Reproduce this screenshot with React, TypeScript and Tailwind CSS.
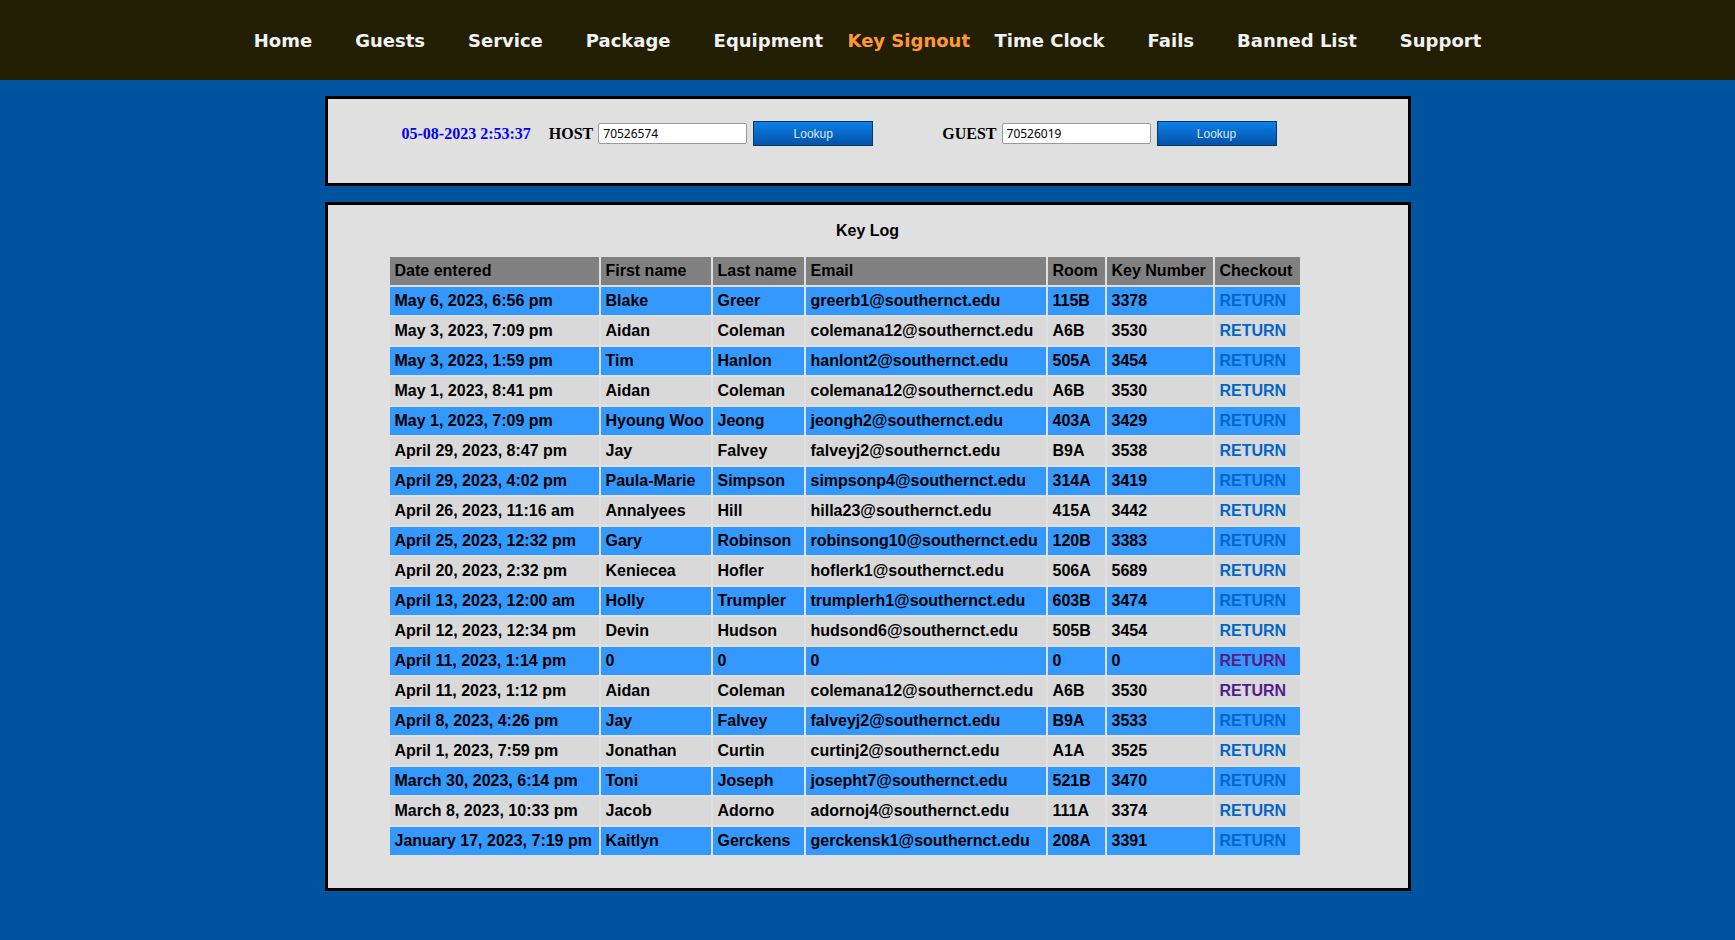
import React from "react";

type Row = {
  date: string;
  first: string;
  last: string;
  email: string;
  room: string;
  key: string;
  visited?: boolean;
};

const rows: Row[] = [
  { date: "May 6, 2023, 6:56 pm", first: "Blake", last: "Greer", email: "greerb1@southernct.edu", room: "115B", key: "3378" },
  { date: "May 3, 2023, 7:09 pm", first: "Aidan", last: "Coleman", email: "colemana12@southernct.edu", room: "A6B", key: "3530" },
  { date: "May 3, 2023, 1:59 pm", first: "Tim", last: "Hanlon", email: "hanlont2@southernct.edu", room: "505A", key: "3454" },
  { date: "May 1, 2023, 8:41 pm", first: "Aidan", last: "Coleman", email: "colemana12@southernct.edu", room: "A6B", key: "3530" },
  { date: "May 1, 2023, 7:09 pm", first: "Hyoung Woo", last: "Jeong", email: "jeongh2@southernct.edu", room: "403A", key: "3429" },
  { date: "April 29, 2023, 8:47 pm", first: "Jay", last: "Falvey", email: "falveyj2@southernct.edu", room: "B9A", key: "3538" },
  { date: "April 29, 2023, 4:02 pm", first: "Paula-Marie", last: "Simpson", email: "simpsonp4@southernct.edu", room: "314A", key: "3419" },
  { date: "April 26, 2023, 11:16 am", first: "Annalyees", last: "Hill", email: "hilla23@southernct.edu", room: "415A", key: "3442" },
  { date: "April 25, 2023, 12:32 pm", first: "Gary", last: "Robinson", email: "robinsong10@southernct.edu", room: "120B", key: "3383" },
  { date: "April 20, 2023, 2:32 pm", first: "Keniecea", last: "Hofler", email: "hoflerk1@southernct.edu", room: "506A", key: "5689" },
  { date: "April 13, 2023, 12:00 am", first: "Holly", last: "Trumpler", email: "trumplerh1@southernct.edu", room: "603B", key: "3474" },
  { date: "April 12, 2023, 12:34 pm", first: "Devin", last: "Hudson", email: "hudsond6@southernct.edu", room: "505B", key: "3454" },
  { date: "April 11, 2023, 1:14 pm", first: "0", last: "0", email: "0", room: "0", key: "0", visited: true },
  { date: "April 11, 2023, 1:12 pm", first: "Aidan", last: "Coleman", email: "colemana12@southernct.edu", room: "A6B", key: "3530", visited: true },
  { date: "April 8, 2023, 4:26 pm", first: "Jay", last: "Falvey", email: "falveyj2@southernct.edu", room: "B9A", key: "3533" },
  { date: "April 1, 2023, 7:59 pm", first: "Jonathan", last: "Curtin", email: "curtinj2@southernct.edu", room: "A1A", key: "3525" },
  { date: "March 30, 2023, 6:14 pm", first: "Toni", last: "Joseph", email: "josepht7@southernct.edu", room: "521B", key: "3470" },
  { date: "March 8, 2023, 10:33 pm", first: "Jacob", last: "Adorno", email: "adornoj4@southernct.edu", room: "111A", key: "3374" },
  { date: "January 17, 2023, 7:19 pm", first: "Kaitlyn", last: "Gerckens", email: "gerckensk1@southernct.edu", room: "208A", key: "3391" },
];

const navItems = ["Home", "Guests", "Service", "Package", "Equipment", "Key Signout", "Time Clock", "Fails", "Banned List", "Support"];

function LookupButton() {
  return (
    <button className="ml-[6px] w-[120px] h-[25px] border border-[#0b3566] bg-gradient-to-b from-[#0a80ea] to-[#0453a6] text-[#dce6f2] text-[12px] font-normal font-['Liberation_Sans',Arial,sans-serif] flex items-center justify-center">
      Lookup
    </button>
  );
}

function IdInput({ value }: { value: string }) {
  return (
    <input
      readOnly
      value={value}
      className="ml-[5px] w-[149px] h-[21px] border border-[#9a9a9a] rounded-[2px] bg-white px-[4px] text-[12px] font-normal text-black font-['Noto_Sans',sans-serif] outline-none"
    />
  );
}

export default function App() {
  const cell = "px-[5px] h-[28px] whitespace-nowrap align-middle";
  return (
    <div className="min-h-[940px] bg-[#00539f] font-['Liberation_Sans',Arial,sans-serif]">
      <nav className="h-[80px] bg-[#231f04] flex items-center justify-center">
        {navItems.map((item) => (
          <a
            key={item}
            className={
              item === "Key Signout"
                ? "px-[3px] text-[18px] font-bold text-[#ff9a33] font-['DejaVu_Sans',sans-serif] leading-[21px] pt-[1px]"
                : "px-[21.5px] text-[18px] font-bold text-[#f2f2f2] font-['DejaVu_Sans',sans-serif] leading-[21px] pt-[1px]"
            }
          >
            {item}
          </a>
        ))}
      </nav>

      <div className="mx-auto mt-[16px] w-[1086px] h-[90px] border-[3px] border-black bg-[#e0e0e0] pt-[22px]">
        <div className="flex items-center h-[25px] pl-[74px] font-['Liberation_Serif','Times_New_Roman',serif] font-bold">
          <span className="text-[16px] text-[#0000ff]">05-08-2023 2:53:37</span>
          <span className="ml-[18px] text-[16px] text-black">HOST</span>
          <IdInput value="70526574" />
          <LookupButton />
          <span className="ml-[69px] text-[16px] text-black">GUEST</span>
          <IdInput value="70526019" />
          <LookupButton />
        </div>
      </div>

      <div className="mx-auto mt-[16px] w-[1086px] h-[689px] border-[3px] border-black bg-[#e0e0e0] pt-[17px]">
        <div className="text-center font-bold text-[16px] leading-[18px] text-black">Key Log</div>
        <table className="mt-[15px] ml-[60px] w-[914px] table-fixed border-separate border-spacing-[2px] text-[16px] font-bold text-black">
          <colgroup>
            <col className="w-[209px]" />
            <col className="w-[110px]" />
            <col className="w-[91px]" />
            <col className="w-[240px]" />
            <col className="w-[57px]" />
            <col className="w-[106px]" />
            <col className="w-[85px]" />
          </colgroup>
          <thead>
            <tr className="bg-[#808080] text-left">
              <th className={cell + " font-bold"}>Date entered</th>
              <th className={cell + " font-bold"}>First name</th>
              <th className={cell + " font-bold"}>Last name</th>
              <th className={cell + " font-bold"}>Email</th>
              <th className={cell + " font-bold"}>Room</th>
              <th className={cell + " font-bold"}>Key Number</th>
              <th className={cell + " font-bold"}>Checkout</th>
            </tr>
          </thead>
          <tbody>
            {rows.map((r, i) => (
              <tr key={i} className={i % 2 === 0 ? "bg-[#3399ff]" : "bg-[#d9d9d9]"}>
                <td className={cell}>{r.date}</td>
                <td className={cell}>{r.first}</td>
                <td className={cell}>{r.last}</td>
                <td className={cell}>{r.email}</td>
                <td className={cell}>{r.room}</td>
                <td className={cell}>{r.key}</td>
                <td className={cell}>
                  <a className={r.visited ? "text-[#551a8b]" : "text-[#0066cc]"}>RETURN</a>
                </td>
              </tr>
            ))}
          </tbody>
        </table>
      </div>
    </div>
  );
}
